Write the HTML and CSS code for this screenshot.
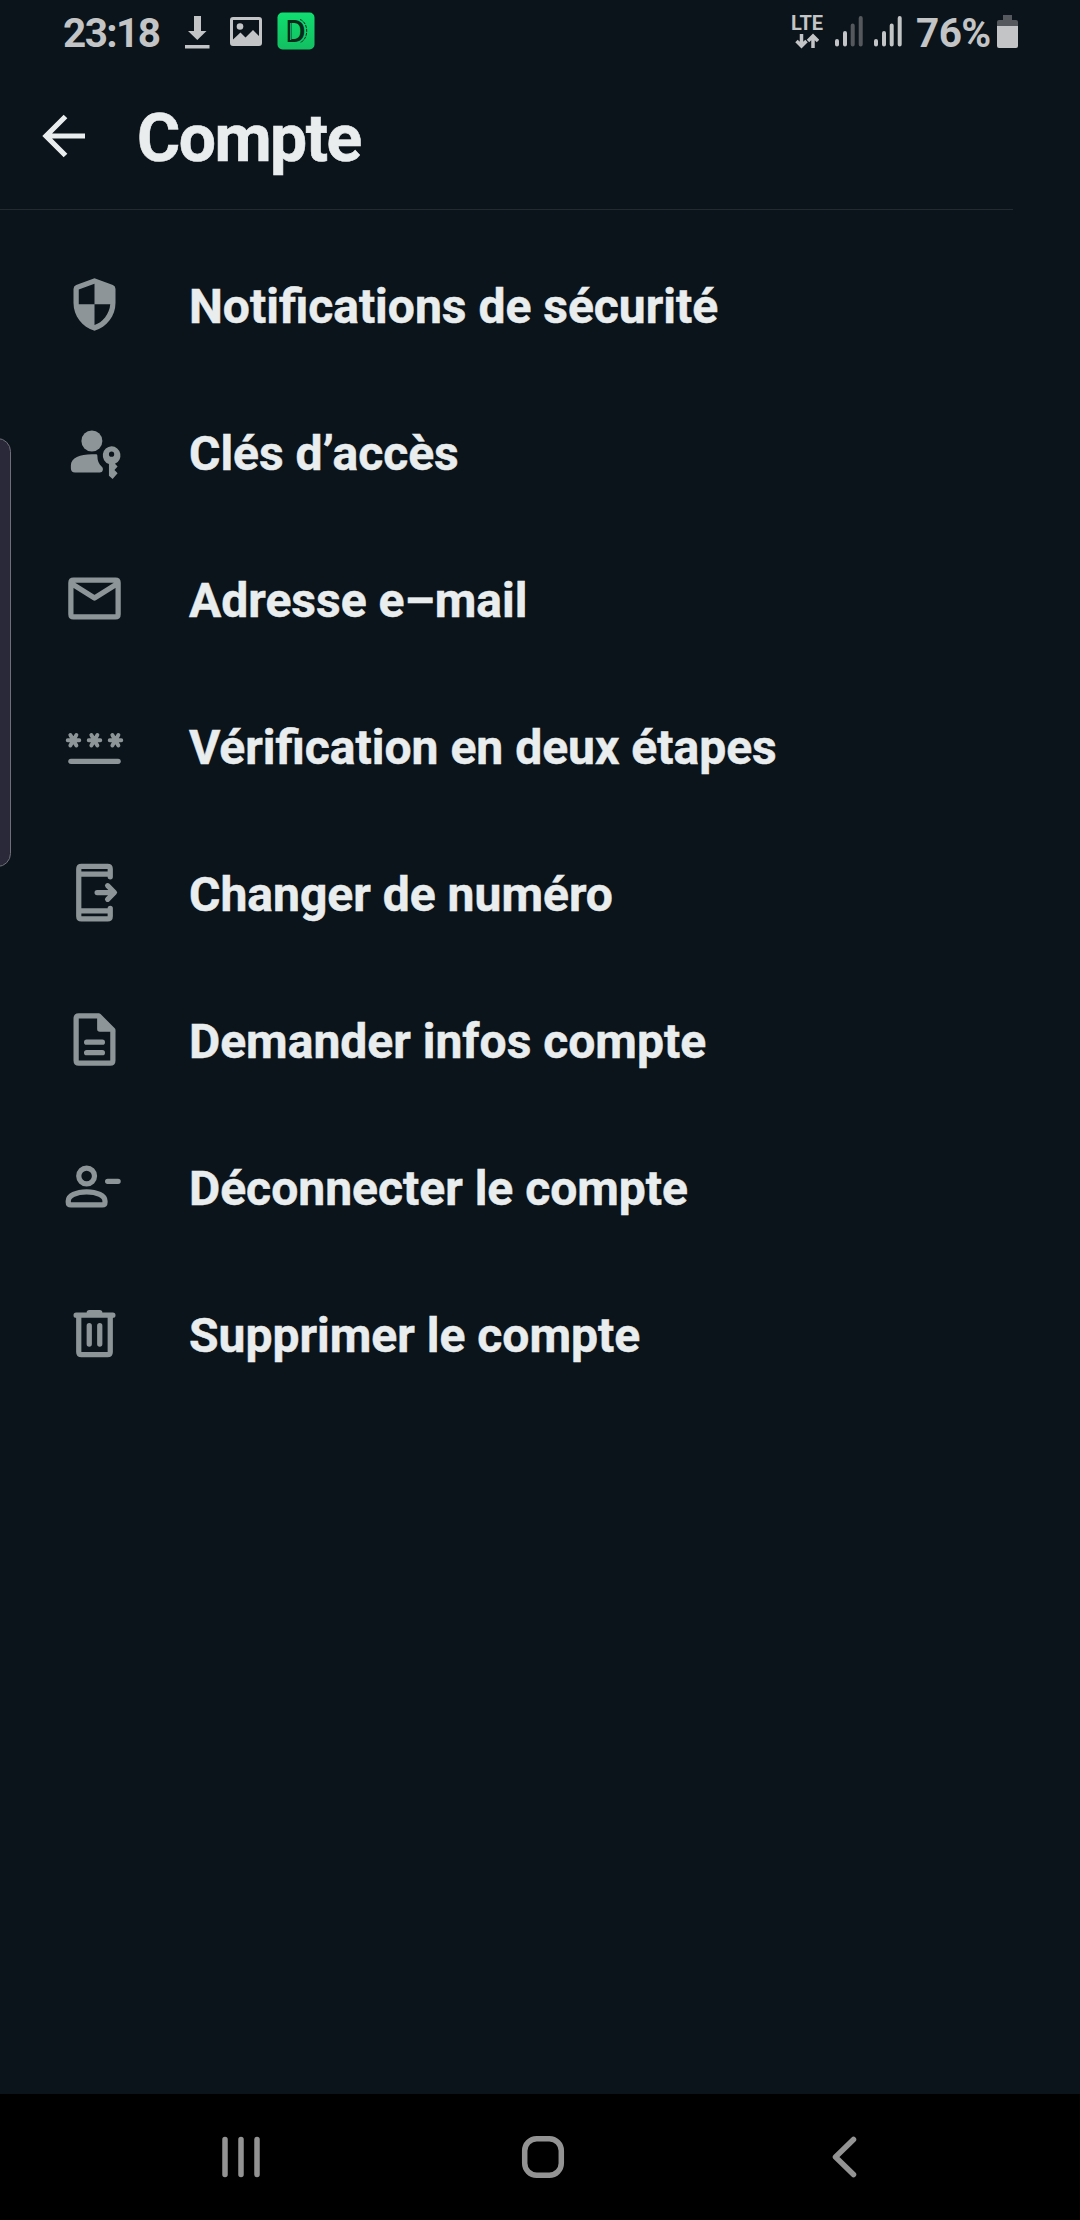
FILE: index.html
```html
<!DOCTYPE html>
<html lang="fr">
<head>
<meta charset="utf-8">
<title>Compte</title>
<link rel="stylesheet" href="styles.css">
</head>
<body>
<div class="screen">
  <div class="status-bar">
    <span class="clock">23:18</span>
    <svg class="st-download" width="26" height="36" viewBox="0 0 26 36"><path d="M10 1h7v15h5.500L13.300 25 4 16h6zM1 30h24.500v3.500H1z"/></svg>
    <svg class="st-image" width="32" height="30" viewBox="0 0 32 30"><path fill-rule="evenodd" d="M3 0h26a3 3 0 0 1 3 3v23a3 3 0 0 1-3 3H3a3 3 0 0 1-3-3V3a3 3 0 0 1 3-3zM3 3v19.500l7.500-7 5 5L23 13l6 6V3z"/><circle cx="10" cy="9.500" r="3.300"/></svg>
    <svg class="st-app" width="38" height="38" viewBox="0 0 38 38"><defs><linearGradient id="g" x2="0" y2="1"><stop stop-color="#10de70"/><stop offset="1" stop-color="#13bf61"/></linearGradient></defs><rect x=".5" y=".5" width="37" height="37" rx="5" fill="url(#g)"/><text class="app-letter" x="8.500" y="30">D</text><path class="app-inner" d="M13.700 11v17"/><path class="app-arc" d="M23 7.500c9 3 9 20 0 23"/></svg>
    <span class="spacer"></span>
    <div class="lte"><span>LTE</span><svg width="24" height="16" viewBox="0 0 24 16"><path d="M6.500 1v12M1.500 8l5 5 5-5M18 15V3M13 8l5-5 5 5"/></svg></div>
    <svg class="signal" width="28" height="31" viewBox="0 0 28 31"><path d="M2 25v3.500M10 17v11.500"/><path class="dim" d="M17.700 9.500v19M25.700 2v26.500"/></svg>
    <svg class="signal second" width="28" height="31" viewBox="0 0 28 31"><path d="M2 25v3.500M10 17v11.500M17.700 9.500v19M25.700 2v26.500"/></svg>
    <span class="percent">76%</span>
    <svg class="battery" width="21" height="33" viewBox="0 0 21 33"><path class="dim" d="M6 0h9v5h4a2 2 0 0 1 2 2v5H0V7a2 2 0 0 1 2-2h4z"/><path d="M0 11h21v20a2 2 0 0 1-2 2H2a2 2 0 0 1-2-2z"/></svg>
  </div>
  <header class="app-bar">
    <svg class="back" width="44" height="44" viewBox="0 0 44 44"><path d="M43 22H4M23.500 2.500L4 22l19.500 19.500"/></svg>
    <h1>Compte</h1>
  </header>
  <ul class="menu">
    <li><svg viewBox="0 0 24 24"><path fill-rule="evenodd" d="M12 2l7 2.600q1 .4 1 1.500v5.300c0 4.900-3.300 9.200-8 10.600-4.700-1.400-8-5.700-8-10.600V6.100q0-1.100 1-1.500zM12 4.100L6 6.300V11.900h6zM12 11.900v7.900c3-.9 5.700-4.100 6-7.900z"/></svg><span>Notifications de sécurité</span></li>
    <li><svg viewBox="0 0 24 24"><circle cx="11" cy="8" r="4"/><path d="M3 17.300c0-3 3.500-4.300 8-4.300h1.700c.3 0 .4.300.4.700 0 1.800.5 3 1.700 4.100.8.700.4 2.200-.8 2.200H4.600Q3 20 3 18.400z"/><path fill-rule="evenodd" d="M18.500 10a3.500 3.500 0 0 1 1.300 6.700l1 1-1.200 1.300 1.200 1.300-1.900 2.200-1.400-1.300v-4.400A3.500 3.500 0 0 1 18.500 10zm0 2a1 1 0 1 0 0 2 1 1 0 0 0 0-2z"/></svg><span>Clés d’accès</span></li>
    <li><svg viewBox="0 0 24 24"><path class="line" d="M4 5h16q1 0 1 1v12q0 1-1 1H4q-1 0-1-1V6q0-1 1-1zM3.200 6.300L12 11.800l8.800-5.500"/></svg><span>Adresse e–mail</span></li>
    <li><svg viewBox="0 0 24 24"><path class="line" d="M3 18h18"/><path class="star" d="M1.800 10h4.400M2.800 8l2.300 4M5.100 8l-2.300 4M9.800 10h4.400M10.800 8l2.300 4M13.100 8l-2.300 4M17.800 10h4.400M18.800 8l2.300 4M21.100 8l-2.300 4"/></svg><span>Vérification en deux étapes</span></li>
    <li><svg viewBox="0 0 24 24"><path class="line" d="M18 6V3q0-1-1-1H7Q6 2 6 3v18q0 1 1 1h10q1 0 1-1v-3M6 5h12M6 19h12M13 12h6M17 9.400l2.600 2.600-2.600 2.600"/></svg><span>Changer de numéro</span></li>
    <li><svg viewBox="0 0 24 24"><path class="line" d="M6 3h7.600L19 8.400V20q0 1-1 1H6q-1 0-1-1V4q0-1 1-1zM9 13h6M9 17h6"/><path d="M13 3l7 6h-6q-1 0-1-1z"/></svg><span>Demander infos compte</span></li>
    <li><svg viewBox="0 0 24 24"><circle class="line" cx="9" cy="8" r="3"/><path class="line" d="M2 17.500C2 15.500 5 14 9 14s7 1.500 7 3.500v.5q0 1-1 1H3q-1 0-1-1zM17 10h4"/></svg><span>Déconnecter le compte</span></li>
    <li><svg viewBox="0 0 24 24"><path class="line" d="M5 5h14M10 4h4M6 5v14q0 1 1 1h10q1 0 1-1V5M10 9v7M14 9v7"/></svg><span>Supprimer le compte</span></li>
  </ul>
  <nav class="nav-bar">
    <svg width="40" height="42" viewBox="0 0 40 42"><path d="M4 3.500v35M20 3.500v35M36 3.500v35"/></svg>
    <svg class="home" width="44" height="44" viewBox="0 0 44 44"><rect x="3.700" y="3.700" width="36.600" height="36.600" rx="12"/></svg>
    <svg width="26" height="42" viewBox="0 0 26 42"><path d="M22.500 3.500L4.500 21l18 17.500"/></svg>
  </nav>
  <div class="edge-panel"></div>
</div>
</body>
</html>
```
FILE: styles.css
```css
* { box-sizing: border-box; }
body { margin: 0; background: #0b141a; font-family: Roboto, "Liberation Sans", sans-serif; }
.screen { position: relative; width: 1080px; height: 2220px; display: flex; flex-direction: column; color: #e9edee; }
svg { display: block; flex: none; }

.status-bar { height: 63px; display: flex; align-items: flex-start; padding: 0 62px 0 63px; color: #c3c4c6; fill: #c3c4c6; font-weight: 700; }
.clock, .percent { font-size: 40.5px; line-height: 48px; margin-top: 9px; white-space: nowrap; }
.clock { width: 97px; letter-spacing: -1.6px; }
.st-download { margin: 15px 0 0 24px; }
.st-image { margin: 17px 0 0 20px; }
.st-app { margin: 12px 0 0 15px; }
.app-letter { font: 500 31px Roboto, sans-serif; fill: #06291b; }
.app-inner { fill: none; stroke: #12cb67; stroke-width: 1px; }
.app-arc { fill: none; stroke: #06291b; stroke-width: 1px; stroke-dasharray: 3 1; }
.spacer { flex: 1; }
.lte { width: 32px; margin: 13px 12px 0 0; display: flex; flex-direction: column; align-items: center; font-size: 20px; line-height: 20px; }
.lte svg { fill: none; stroke: #c3c4c6; stroke-width: 3.500px; }
.signal { margin: 16px 0 0; fill: none; stroke: #c3c4c6; stroke-width: 4px; stroke-linecap: round; }
.signal .dim { stroke: #55595d; }
.second { margin-left: 11px; }
.percent { width: 73px; margin-left: 14px; letter-spacing: -0.6px; }
.battery { margin: 15px 0 0 8px; }
.battery .dim { fill: #55595d; }

.app-bar { width: 1013px; height: 147px; display: flex; align-items: center; padding: 0 0 0 42px; border-bottom: 1px solid #232b30; }
.back { fill: none; stroke: #e9edee; stroke-width: 5.200px; }
h1 { margin: 0 0 0 51px; padding-top: 5px; font-size: 66px; line-height: 78px; font-weight: 700; letter-spacing: -1.5px; -webkit-text-stroke: 0.6px #e9edee; }

.menu { list-style: none; margin: 21px 0 0; padding: 0; flex: 1; }
.menu li { height: 147px; display: flex; align-items: center; padding-left: 63px; font-size: 48px; font-weight: 700; line-height: 56px; white-space: nowrap; -webkit-text-stroke: 0.5px #e9edee; }
.menu li svg { width: 63px; height: 63px; fill: #8d9598; margin-right: 63px; }
.menu li span { padding-top: 4px; }
.menu .line { fill: none; stroke: #8d9598; stroke-width: 2; stroke-linecap: round; stroke-linejoin: round; }
.menu .star { fill: none; stroke: #8d9598; stroke-width: 1.500; stroke-linecap: round; }

.nav-bar { height: 126px; background: #000; display: flex; align-items: center; justify-content: space-between; padding: 0 223px 0 221px; }
.nav-bar svg { fill: none; stroke: #939393; stroke-width: 5.500px; stroke-linecap: round; stroke-linejoin: round; }
.nav-bar .home { margin-right: 6px; }

.edge-panel { position: absolute; left: -16px; top: 438px; width: 27px; height: 429px; border: 1px solid #6f7077; border-radius: 16px; background: #2a293a; }
```
